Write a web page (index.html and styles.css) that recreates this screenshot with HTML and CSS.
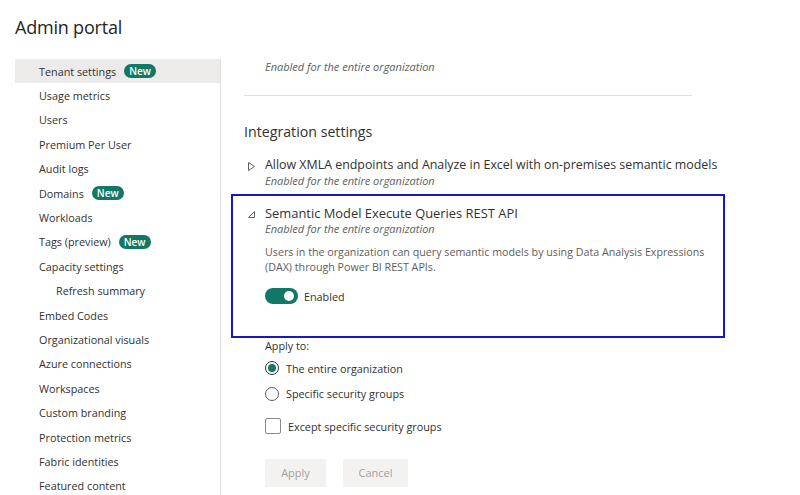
FILE: index.html
```html
<!DOCTYPE html>
<html lang="en">
<head>
   <meta charset="UTF-8">
   <meta name="viewport" content="width=device-width, initial-scale=1.0">
   <title>Admin portal</title>
   <link rel="stylesheet" href="styles.css">
</head>
<body>
   <h1 class="page-title">Admin portal</h1>
   <div class="layout">
      <ul class="nav">
         <li class="nav-item active">Tenant settings <span class="badge">New</span></li>
         <li class="nav-item">Usage metrics</li>
         <li class="nav-item">Users</li>
         <li class="nav-item">Premium Per User</li>
         <li class="nav-item">Audit logs</li>
         <li class="nav-item">Domains <span class="badge">New</span></li>
         <li class="nav-item">Workloads</li>
         <li class="nav-item">Tags (preview) <span class="badge">New</span></li>
         <li class="nav-item">Capacity settings</li>
         <li class="nav-item sub">Refresh summary</li>
         <li class="nav-item">Embed Codes</li>
         <li class="nav-item">Organizational visuals</li>
         <li class="nav-item">Azure connections</li>
         <li class="nav-item">Workspaces</li>
         <li class="nav-item">Custom branding</li>
         <li class="nav-item">Protection metrics</li>
         <li class="nav-item">Fabric identities</li>
         <li class="nav-item">Featured content</li>
      </ul>

      <div class="main">
         <div class="prev-setting">
            <p class="status">Enabled for the entire organization</p>
         </div>

         <h2 class="section-title">Integration settings</h2>

         <div class="setting">
            <svg class="chevron" width="9" height="11" viewBox="0 0 9 11"><polygon points="1.5,1.5 7.5,5.5 1.5,9.5" fill="none" stroke="#605e5c" stroke-width="1"/></svg>
            <div>
               <div class="setting-name">Allow XMLA endpoints and Analyze in Excel with on-premises semantic models</div>
               <p class="status">Enabled for the entire organization</p>
            </div>
         </div>

         <div class="setting expanded">
            <svg class="chevron" width="9" height="9" viewBox="0 0 9 9"><polygon points="7.5,1.5 7.5,7.5 1.5,7.5" fill="none" stroke="#605e5c" stroke-width="1"/></svg>
            <div>
               <div class="setting-name wide">Semantic Model Execute Queries REST API</div>
               <p class="status">Enabled for the entire organization</p>
               <p class="desc">Users in the organization can query semantic models by using Data Analysis Expressions (DAX) through Power BI REST APIs.</p>
               <div class="toggle-row">
                  <span class="toggle"><span class="knob"></span></span>
                  <span>Enabled</span>
               </div>
            </div>
         </div>

         <div class="apply">
            <div class="apply-label">Apply to:</div>
            <label class="option first"><span class="radio checked"></span>The entire organization</label>
            <label class="option"><span class="radio"></span>Specific security groups</label>
            <label class="option check"><span class="checkbox"></span>Except specific security groups</label>
            <div class="actions">
               <button class="btn apply-btn" disabled>Apply</button>
               <button class="btn cancel-btn" disabled>Cancel</button>
            </div>
         </div>
      </div>
   </div>
</body>
</html>
```

FILE: styles.css
```css
*{
   margin: 0;
   padding: 0;
   box-sizing: border-box;
}
body{
   background: #fff;
   color: #323130;
   font-family: "Open Sans", "Noto Sans", sans-serif;
   width: 800px;
   height: 495px;
   overflow: hidden;
}
.page-title{
   font-weight: 400;
   font-size: 18px;
   color: #252423;
   padding: 15px 0 0 15px;
   height: 59px;
   letter-spacing: -0.2px;
}
.layout{
   display: flex;
}
.nav{
   list-style: none;
   margin-left: 15px;
   width: 206px;
   border-right: 1px solid #e1dfdd;
   height: 440px;
}
.nav-item{
   height: 24.4px;
   display: flex;
   align-items: center;
   padding-left: 24px;
   font-size: 10.8px;
   color: #323130;
}
.nav-item.active{
   background: #edebe9;
}
.nav-item.sub{
   padding-left: 41px;
}
.badge{
   display: inline-block;
   background: #117865;
   color: #fff;
   font-size: 10px;
   font-weight: 600;
   line-height: 14px;
   height: 14px;
   padding: 0 5px;
   border-radius: 8px;
   margin-left: 8px;
}
.main{
   padding-left: 23px;
   flex: 1;
}
.status{
   font-style: italic;
   font-size: 11px;
   color: #605e5c;
   line-height: 15px;
}
.prev-setting{
   width: 448px;
   padding: 0 0 21px 21px;
   border-bottom: 1px solid #e1dfdd;
}
.section-title{
   font-weight: 400;
   font-size: 14.2px;
   color: #323130;
   margin: 26px 0 16px;
}
.setting{
   display: grid;
   grid-template-columns: 21px 1fr;
}
.chevron{
   margin: 4px 0 0 3px;
}
.setting-name{
   font-size: 12.4px;
   color: #323130;
   line-height: 16px;
}
.setting-name.wide{
   font-size: 12.9px;
}
.setting.expanded{
   margin: 6px 0 0 -13px;
   width: 494px;
   height: 144px;
   border: 2px solid #1717c4;
   padding: 9px 0 0 11px;
}
.setting.expanded .chevron{
   margin-top: 5px;
}
.desc{
   font-size: 10.7px;
   color: #605e5c;
   line-height: 14.5px;
   margin-top: 9px;
   width: 460px;
}
.toggle-row{
   display: flex;
   align-items: center;
   gap: 6px;
   margin-top: 14px;
   font-size: 10.8px;
   color: #323130;
}
.toggle{
   width: 33px;
   height: 16px;
   border-radius: 8px;
   background: #117865;
   display: flex;
   align-items: center;
   justify-content: flex-end;
   padding-right: 4px;
}
.knob{
   width: 10px;
   height: 10px;
   border-radius: 50%;
   background: #fff;
}
.apply{
   padding-left: 21px;
   font-size: 10.8px;
   color: #323130;
}
.apply-label{
   line-height: 15px;
}
.option{
   display: flex;
   align-items: center;
   height: 24.5px;
   margin-top: 1px;
}
.option.first{
   margin-top: 3px;
}
.radio{
   width: 14px;
   height: 14px;
   border: 1px solid #605e5c;
   border-radius: 50%;
   margin-right: 7px;
   display: flex;
   align-items: center;
   justify-content: center;
}
.radio.checked{
   border-color: #323130;
}
.radio.checked::after{
   content: '';
   width: 8px;
   height: 8px;
   border-radius: 50%;
   background: #117865;
}
.option.check{
   margin-top: 8px;
}
.checkbox{
   width: 16px;
   height: 16px;
   border: 1px solid #8a8886;
   border-radius: 2px;
   margin-right: 7px;
}
.actions{
   display: flex;
   gap: 17px;
   margin-top: 20px;
}
.btn{
   height: 28px;
   border: 0;
   background: #f3f2f1;
   color: #a19f9d;
   font-family: inherit;
   font-size: 11px;
}
.apply-btn{
   width: 61px;
}
.cancel-btn{
   width: 65px;
}
```
